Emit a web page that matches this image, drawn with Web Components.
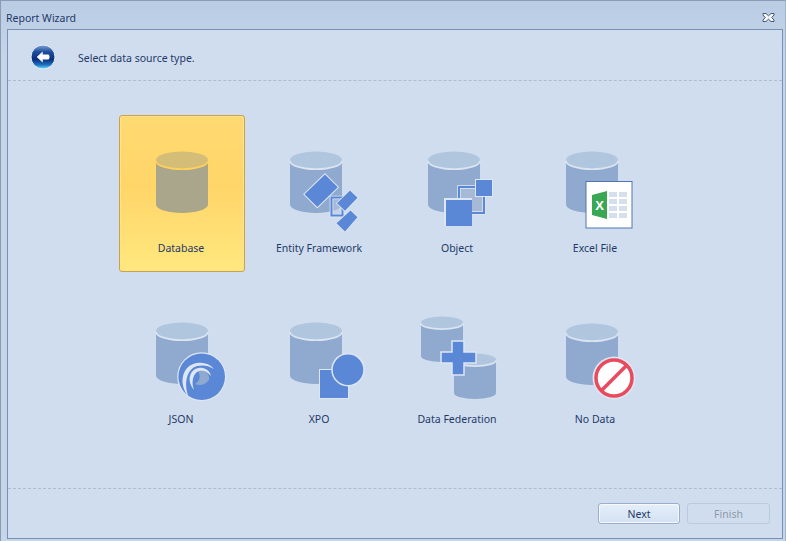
<!DOCTYPE html>
<html><head><meta charset="utf-8"><title>Report Wizard</title>
<style>
html,body{margin:0;padding:0;height:100%;background:#c4d4e9;overflow:hidden}
body{font:10.5px "Noto Sans","Liberation Sans",sans-serif;color:#1f3a68}
</style></head><body>
<wizard-window heading="Report Wizard">
  <span slot="prompt">Select data source type.</span>
  <wizard-tile label="Database" selected><wizard-icon name="database"></wizard-icon></wizard-tile>
  <wizard-tile label="Entity Framework"><wizard-icon name="entity"></wizard-icon></wizard-tile>
  <wizard-tile label="Object"><wizard-icon name="object"></wizard-icon></wizard-tile>
  <wizard-tile label="Excel File"><wizard-icon name="excel"></wizard-icon></wizard-tile>
  <wizard-tile label="JSON"><wizard-icon name="json"></wizard-icon></wizard-tile>
  <wizard-tile label="XPO"><wizard-icon name="xpo"></wizard-icon></wizard-tile>
  <wizard-tile label="Data Federation"><wizard-icon name="federation"></wizard-icon></wizard-tile>
  <wizard-tile label="No Data"><wizard-icon name="nodata"></wizard-icon></wizard-tile>
  <wizard-button slot="actions" w="82" primary>Next</wizard-button>
  <wizard-button slot="actions" w="83" disabled>Finish</wizard-button>
</wizard-window>
<script>
const BLUE='#5a88d7', HALO='#dde6f3';
function cyl(x,y,w,h,ry,o={}){
  const body=o.body||'#90a9cf', top=o.top||'#b0c5de', rim=o.rim||'#dbe5f2';
  const cy=y+ry+.5, rx=w/2;
  return `<path fill="${body}" d="M${x} ${cy}V${y+h-ry}A${rx} ${ry} 0 0 0 ${x+w} ${y+h-ry}V${cy}Z"/>
  <ellipse cx="${x+rx}" cy="${cy}" rx="${rx}" ry="${ry}" fill="${top}"/>
  <path fill="none" stroke="${rim}" stroke-width="1.8" d="M${x} ${cy+.7}A${rx} ${ry} 0 0 0 ${x+w} ${cy+.7}"/>`;
}
const poly=(pts,fill,extra='')=>`<polygon points="${pts}" fill="${fill}" ${extra}/>`;
const haloPoly=(pts,w=1.6)=>poly(pts,BLUE,`stroke="${HALO}" stroke-width="${w}" paint-order="stroke"`);
const ICONS={
 database:cyl(23,12,52,62,8.5,{body:'#a9a68b',top:'#d4bd76',rim:'#ffd15c'}),
 entity:cyl(19,12,52,62,8.5)+
  haloPoly('54,35.500 66.800,48.300 46.300,68 33.500,55.300',2)+
  `<path d="M60.500 58.500H71.500V76.500H60.500Z" fill="#b9cae2" fill-opacity=".5" stroke="${HALO}" stroke-width="3.600"/>
   <path d="M60.500 58.500H71.500V76.500H60.500Z" fill="none" stroke="${BLUE}" stroke-width="2"/>`+
  haloPoly('79,51.500 86.500,58.700 74,71.800 66,64.300')+
  haloPoly('79.500,71.500 86.500,78.300 74,92.500 65.500,84.300'),
 object:cyl(19,12,52,62,8.5)+
  `<rect x="50" y="48" width="25" height="26" fill="#a6bad8" stroke="${HALO}" stroke-width="3.600"/>
   <rect x="50" y="48" width="25" height="26" fill="none" stroke="${BLUE}" stroke-width="2"/>
   <rect x="66" y="40" width="18" height="18" fill="${HALO}"/><rect x="67" y="41" width="16" height="16" fill="${BLUE}"/>
   <rect x="35" y="59" width="28" height="28" fill="${HALO}"/><rect x="37" y="61" width="26" height="26" fill="${BLUE}"/>`,
 excel:cyl(19,12,52,62,8.5)+
  `<rect x="39" y="42.500" width="46" height="46.500" fill="#fff" stroke="#5076b2"/>
   <polygon points="45,56 60,52 60,80 45,76" fill="#3aa755"/>
   <text x="52.500" y="71" text-anchor="middle" font-family="Liberation Sans" font-weight="700" font-size="13" fill="#fff">X</text>`+
  [53,60,67,74].map(y=>[62,72].map(x=>`<rect x="${x}" y="${y}" width="8" height="5" fill="#d5e0ec"/>`).join('')).join(''),
 json:cyl(23,12,52,62,8.5)+
  `<circle cx="68.700" cy="66.700" r="24.500" fill="${HALO}"/><circle cx="68.700" cy="66.700" r="23.300" fill="${BLUE}"/>
   <path d="M65 61C72 59 77 64 76 70C72 75 67 76 62 74C67 71 68 66 65 61Z" fill="#90a9cf"/>
   <path d="M56 88C44 72 50 55 64 53C71 52 77 54 81 59C75 55 69 55 64 56C54 59 50 73 56 88Z" fill="${HALO}"/>
   <path d="M61 80C53 70 57 59 66 58C72 57 77 61 78 66C74 61 70 60 66 61C60 63 58 72 61 80Z" fill="${HALO}"/>`,
 xpo:cyl(19,12,52,62,8.5)+
  `<rect x="48" y="59" width="30" height="30" fill="${HALO}"/><rect x="49" y="60" width="28" height="28" fill="${BLUE}"/>
   <circle cx="77" cy="59.700" r="16" fill="${BLUE}" stroke="${HALO}" stroke-width="1.500"/>`,
 federation:cyl(12,6,42,46,6)+cyl(45,43,42,46,6)+
  `<path d="M43 31H55V42H67V53H55V65H43V53H32V42H43Z" fill="${BLUE}" stroke="${HALO}" stroke-width="1.500"/>`,
 nodata:cyl(19,13,52,62,8.5)+
  `<circle cx="67" cy="68" r="21.500" fill="${HALO}"/><circle cx="67" cy="68" r="18" fill="#fff" stroke="#e94a5e" stroke-width="3.500"/>
   <line x1="54.500" y1="80.500" x2="79.500" y2="55.500" stroke="#e94a5e" stroke-width="3.500"/>`
};
function shadow(el,html){el.attachShadow({mode:'open'}).innerHTML=html}

customElements.define('wizard-icon',class extends HTMLElement{
  connectedCallback(){
    if(this.shadowRoot)return;
    shadow(this,`<style>:host{display:block;width:96px;height:96px}svg{display:block}</style>
    <svg width="96" height="96" viewBox="0 0 96 96">${ICONS[this.getAttribute('name')]}</svg>`);
  }
});

customElements.define('wizard-tile',class extends HTMLElement{
  connectedCallback(){
    if(this.shadowRoot)return;
    shadow(this,`<style>
    :host{display:flex;flex-direction:column;align-items:center;box-sizing:border-box;width:126px;height:157px;padding:23px 2px 0 0;border:1px solid transparent;border-radius:3px}
    :host([selected]){background:linear-gradient(180deg,#ffda72 0%,#ffd568 45%,#ffe87f 100%);border-color:#c9a24c;box-shadow:inset 0 0 0 1px #ffe188}
    .l{margin-top:7px;line-height:13px;white-space:nowrap;color:#1f3a68}
    </style><slot></slot><div class="l">${this.getAttribute('label')}</div>`);
  }
});

customElements.define('wizard-button',class extends HTMLElement{
  connectedCallback(){
    if(this.shadowRoot)return;
    this.style.setProperty('--w',(this.getAttribute('w')||82)+'px');
    shadow(this,`<style>
    :host{display:flex;align-items:center;justify-content:center;box-sizing:border-box;width:var(--w);height:21px;border-radius:3px;border:1px solid #9aadcb;background:linear-gradient(180deg,#e6effa,#d2e1f2);box-shadow:inset 0 0 0 1px #f5f9fd;color:#1f3a68}
    :host([disabled]){background:none;border-color:#bccadd;box-shadow:none;color:#8e9aa9}
    </style><slot></slot>`);
  }
});

customElements.define('wizard-window',class extends HTMLElement{
  connectedCallback(){
    if(this.shadowRoot)return;
    shadow(this,`<style>
    :host{display:flex;flex-direction:column;box-sizing:border-box;height:541px;border:1px solid #8b9bb0;border-bottom:0;border-right-color:#a3b3c8;background:linear-gradient(180deg,#b9cce4 0,#c6d6ea 60px,#c6d6ea 100%)}
    .title{display:flex;align-items:center;justify-content:space-between;box-sizing:border-box;height:28px;flex:none;padding:4px 10px 0 5px;color:#1f3a68}
    .title span{margin-top:2px}
    .title svg{display:block}
    .panel{flex:1;display:flex;flex-direction:column;margin:0 2px 2px 6px;border:1px solid #7790b3;background:#d0ddee;min-height:0}
    .head{flex:none;display:flex;align-items:center;gap:22px;box-sizing:content-box;height:46px;padding:4px 0 0 22px;border-bottom:1px dashed #aebccf;color:#1f3a68}
    .head svg{display:block;flex:none}
    .head .p{padding-top:2px}
    .grid{flex:1;display:grid;grid-template-columns:repeat(4,126px);grid-auto-rows:157px;column-gap:12px;row-gap:14px;padding:34px 0 0 111px;align-content:start}
    .foot{flex:none;display:flex;justify-content:flex-end;gap:7px;height:35px;padding:14px 12px 0 0;border-top:1px dashed #aebccf}
    </style>
    <div class="title"><span>${this.getAttribute('heading')}</span>
      <svg width="13" height="11" viewBox="0 0 13 11"><path d="M1 1.500H4L6.500 3.800 9 1.500H12V3L9.700 5.500 12 8V9.500H9L6.500 7.200 4 9.500H1V8L3.300 5.500 1 3Z" fill="#f4f7fb" stroke="#4b5a72"/></svg>
    </div>
    <div class="panel">
      <div class="head">
        <svg width="26" height="26" viewBox="0 0 26 26">
          <defs><linearGradient id="g" x1="0" y1="0" x2="0" y2="1"><stop offset="0" stop-color="#7fa3d6"/><stop offset=".28" stop-color="#1f4f9e"/><stop offset=".6" stop-color="#0b2f7c"/><stop offset=".82" stop-color="#1a70c0"/><stop offset="1" stop-color="#72def6"/></linearGradient></defs>
          <circle cx="13" cy="13" r="12" fill="url(#g)" stroke="#e4ebf6" stroke-width="1"/>
          <path d="M7 13L12.500 8V10.800H18.500C19.500 12 19.500 14 18.500 15.200H12.500V18Z" fill="#fff" stroke="#fff" stroke-width=".5" stroke-linejoin="round"/>
        </svg>
        <div class="p"><slot name="prompt"></slot></div>
      </div>
      <div class="grid"><slot></slot></div>
      <div class="foot"><slot name="actions"></slot></div>
    </div>`);
  }
});
</script>
</body></html>
